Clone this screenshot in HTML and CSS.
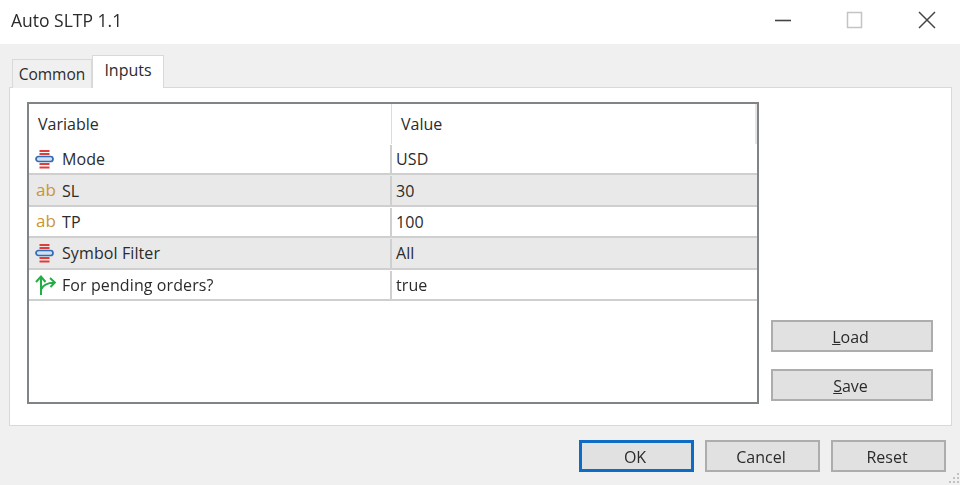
FILE: index.html
```html
<!DOCTYPE html>
<html lang="en">
<head>
    <meta charset="UTF-8">
    <meta name="viewport" content="width=device-width, initial-scale=1.0">
    <title>Auto SLTP 1.1</title>
    <link rel="stylesheet" href="styles.css">
</head>
<body>

    <div class="window">
        <!-- Title bar -->
        <header class="titlebar">
            <span class="title">Auto SLTP 1.1</span>
            <div class="win-controls">
                <svg class="win-icon" width="18" height="18" viewBox="0 0 18 18"><path d="M1 9.500H17" stroke="#444" stroke-width="1.600"/></svg>
                <svg class="win-icon" width="18" height="18" viewBox="0 0 18 18"><rect x="1.500" y="1.500" width="14" height="15" fill="none" stroke="#c4c4c4" stroke-width="1.500"/></svg>
                <svg class="win-icon" width="18" height="18" viewBox="0 0 18 18"><path d="M1 1L17 17M17 1L1 17" stroke="#444" stroke-width="1.500"/></svg>
            </div>
        </header>

        <!-- Tabs -->
        <nav class="tabs">
            <div class="tab">Common</div>
            <div class="tab tab-active">Inputs</div>
        </nav>

        <main class="panel">
            <div class="grid-box">
                <div class="grid-head">
                    <div class="head-cell col-var">Variable</div>
                    <div class="head-cell col-val">Value</div>
                </div>

                <div class="row">
                    <div class="cell col-var">
                        <svg class="row-icon" width="22" height="22" viewBox="0 0 22 22"><use href="#icon-enum"/></svg>
                        <span>Mode</span>
                    </div>
                    <div class="cell col-val">USD</div>
                </div>
                <div class="row row-alt">
                    <div class="cell col-var">
                        <span class="ab-icon">ab</span>
                        <span>SL</span>
                    </div>
                    <div class="cell col-val">30</div>
                </div>
                <div class="row">
                    <div class="cell col-var">
                        <span class="ab-icon">ab</span>
                        <span>TP</span>
                    </div>
                    <div class="cell col-val">100</div>
                </div>
                <div class="row row-alt">
                    <div class="cell col-var">
                        <svg class="row-icon" width="22" height="22" viewBox="0 0 22 22"><use href="#icon-enum"/></svg>
                        <span>Symbol Filter</span>
                    </div>
                    <div class="cell col-val">All</div>
                </div>
                <div class="row">
                    <div class="cell col-var">
                        <svg class="row-icon" width="22" height="22" viewBox="0 0 22 22">
                            <path d="M7 21V3M2 8L7 2.500L11.500 8M7.500 15C9 11 13 9 20.500 8.500M16 4L20.800 8.500L16.500 13" fill="none" stroke="#22ad45" stroke-width="2"/>
                        </svg>
                        <span>For pending orders?</span>
                    </div>
                    <div class="cell col-val">true</div>
                </div>
            </div>

            <div class="side-buttons">
                <button class="btn btn-side"><u>L</u>oad</button>
                <button class="btn btn-side"><u>S</u>ave</button>
            </div>
        </main>

        <footer class="footer">
            <button class="btn btn-main btn-default">OK</button>
            <button class="btn btn-main">Cancel</button>
            <button class="btn btn-main">Reset</button>
        </footer>

        <svg class="grip" width="12" height="12" viewBox="0 0 12 12">
            <path d="M9 1h2v2H9zM5 5h2v2H5zM9 5h2v2H9zM1 9h2v2H1zM5 9h2v2H5zM9 9h2v2H9z" fill="#c2c2c2"/>
        </svg>
    </div>

    <!-- Shared enum icon -->
    <svg class="defs" width="0" height="0">
        <defs>
            <g id="icon-enum">
                <path d="M5.500 3H15.500M5.500 6H15.500M5.500 16H15.500M5.500 19.500H15.500" stroke="#de3f3c" stroke-width="1.800"/>
                <rect x="2" y="8.500" width="17" height="5" rx="2.500" fill="#cfe0f2" stroke="#2f6cb5" stroke-width="1.700"/>
            </g>
        </defs>
    </svg>

</body>
</html>
```

FILE: styles.css
```css
* {
    box-sizing: border-box;
}

body {
    margin: 0;
    background-color: #f0f0f0;
    font-family: "Open Sans", Arial, sans-serif;
    font-size: 16px;
    color: #2b2b2b;
}

.window {
    position: relative;
    width: 960px;
    height: 485px;
    overflow: hidden;
    filter: blur(0.4px);
}

/* Title bar */
.titlebar {
    display: flex;
    justify-content: space-between;
    align-items: center;
    height: 44px;
    padding: 0 24px 4px 11px;
    background: #fff;
}

.title {
    font-size: 17.500px;
}

.win-controls {
    display: flex;
    gap: 54px;
}

/* Tabs */
.tabs {
    display: flex;
    align-items: flex-end;
    height: 44px;
    padding-left: 12px;
    margin-bottom: -1px;
}

.tab {
    display: flex;
    justify-content: center;
    align-items: center;
    width: 80px;
    height: 29px;
    font-size: 15.500px;
    background: #f0f0f0;
    border: 1px solid #d9d9d9;
    border-bottom: none;
}

.tab-active {
    position: relative;
    z-index: 1;
    width: 72px;
    height: 33px;
    padding-bottom: 4px;
    font-size: 16px;
    background: #fff;
}

/* Main panel */
.panel {
    display: flex;
    align-items: flex-end;
    gap: 12px;
    width: 943px;
    height: 339px;
    margin-left: 9px;
    padding: 15px 18px 21px 17px;
    background: #fff;
    border: 1px solid #d9d9d9;
}

.grid-box {
    flex: none;
    width: 732px;
    height: 302px;
    background: #fff;
    border: 2px solid #7f8487;
}

.grid-head {
    display: flex;
    height: 40px;
}

.head-cell {
    display: flex;
    align-items: center;
    padding: 0 0 0 9px;
    border-right: 1px solid #dcdcdc;
}

.row {
    display: flex;
    height: 31.400px;
    padding-top: 1px;
    border-bottom: 2px solid #cfcfcf;
}

.row-alt {
    background: #e9e9e9;
}

.col-var {
    width: 363px;
    flex: none;
}

.col-val {
    width: 365px;
    flex: none;
}

.cell {
    display: flex;
    align-items: center;
    gap: 6px;
    padding-left: 4px;
    letter-spacing: 0.1px;
}

.cell.col-var {
    padding-left: 5px;
    border-right: 2px solid #cfcfcf;
}

.row-icon {
    flex: none;
}

.ab-icon {
    flex: none;
    width: 22px;
    padding-left: 2px;
    margin-top: -3px;
    font-size: 17px;
    line-height: 1;
    letter-spacing: 0;
    color: #cd9433;
}

.head-cell.col-val {
    padding-left: 9px;
    border-right: 2px solid #e4e4e4;
}

/* Buttons */
.btn {
    font-family: inherit;
    font-size: 16px;
    color: #2b2b2b;
    background: #e1e1e1;
    border: 2px solid #adadad;
    padding: 2px 3px 0 0;
}

.side-buttons {
    display: flex;
    flex-direction: column;
    gap: 17px;
    padding-bottom: 3px;
}

.btn-side {
    width: 162px;
    height: 32px;
}

.footer {
    display: flex;
    justify-content: flex-end;
    gap: 11px;
    padding: 14px 14px 0 0;
}

.btn-main {
    width: 115px;
    height: 32px;
}

.btn-default {
    border: 3px solid #0f6cc4;
}

.grip {
    position: absolute;
    right: 0;
    bottom: 1px;
}

.defs {
    position: absolute;
}
```
